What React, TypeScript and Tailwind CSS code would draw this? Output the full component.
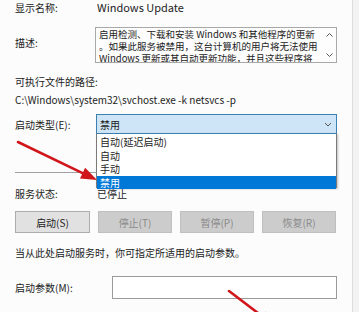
import React from 'react'

const font = { fontFamily: '"Noto Sans CJK SC", "Noto Sans", sans-serif' }

function Arrow({ className, x1, y1, x2, y2 }: { className: string; x1: number; y1: number; x2: number; y2: number }) {
  // red annotation arrow, drawn over the dialog
  const a = Math.atan2(y2 - y1, x2 - x1)
  const len = 16
  const w = 6
  const bx = x2 - len * Math.cos(a)
  const by = y2 - len * Math.sin(a)
  const p1 = `${bx + w * Math.sin(a)},${by - w * Math.cos(a)}`
  const p2 = `${bx - w * Math.sin(a)},${by + w * Math.cos(a)}`
  return (
    <svg className={className} width="359" height="312" viewBox="0 0 359 312">
      <line x1={x1} y1={y1} x2={bx} y2={by} stroke="#d0161b" strokeWidth="2.6" strokeLinecap="round" />
      <polygon points={`${x2},${y2} ${p1} ${p2}`} fill="#d0161b" />
    </svg>
  )
}

export default function App() {
  return (
    <div className="relative w-[359px] h-[312px] overflow-hidden bg-[#fcfcfc] flex text-[10px] text-[#222]" style={font}>
      <div className="w-[352px] pl-[15px] pr-[15px] flex flex-col">
        <div className="flex items-center h-[14px] mt-[0px]">
          <span className="w-[82px]">显示名称:</span>
          <span className="text-[11px]">Windows Update</span>
        </div>

        <div className="flex mt-[13px]">
          <span className="w-[80px] pt-[8px]">描述:</span>
          <div className="flex-1 h-[36px] border border-[#a8a8a8] bg-[#fdfdfd] flex overflow-hidden">
            <div className="flex-1 pl-[3px] pt-[1px] leading-[11.5px] text-[9.5px] whitespace-nowrap overflow-hidden">
              <div>启用检测、下载和安装 Windows 和其他程序的更新</div>
              <div>。如果此服务被禁用，这台计算机的用户将无法使用</div>
              <div className="mt-[1px]">Windows 更新或其自动更新功能，并且这些程序将</div>
            </div>
            <div className="w-[14px] flex flex-col items-center justify-between pt-[5px] pb-[5px]">
              <svg width="7" height="4" viewBox="0 0 7 4">
                <path d="M0.5 3.5 L3.5 0.5 L6.5 3.5" fill="none" stroke="#555" strokeWidth="1" />
              </svg>
              <svg width="7" height="4" viewBox="0 0 7 4">
                <path d="M0.5 0.5 L3.5 3.5 L6.5 0.5" fill="none" stroke="#555" strokeWidth="1" />
              </svg>
            </div>
          </div>
        </div>

        <div className="mt-[11px] h-[14px] flex items-center">可执行文件的路径:</div>
        <div className="mt-[4px] h-[14px] flex items-center">C:\Windows\system32\svchost.exe -k netsvcs -p</div>

        <div className="flex items-center mt-[8px]">
          <span className="w-[81px]">启动类型(E):</span>
          <div className="relative flex-1 h-[20px] border border-[#3c7fb1] bg-[#cde5f7] flex items-center justify-between pl-[3px] pr-[4px]">
            <span>禁用</span>
            <svg width="8" height="5" viewBox="0 0 8 5">
              <path d="M1 1 L4 4 L7 1" fill="none" stroke="#555" strokeWidth="1" />
            </svg>
            <div className="absolute left-[-1px] right-[-1px] top-[18px] h-[55px] border border-[#7a7a7a] border-t-[#3c7fb1] bg-white shadow-[1px_1px_2px_rgba(0,0,0,0.25)] z-10 flex flex-col pt-[1px] leading-[13.5px]">
              <div className="pl-[3px]">自动(延迟启动)</div>
              <div className="pl-[3px]">自动</div>
              <div className="pl-[3px]">手动</div>
              <div className="pl-[3px] bg-[#0078d7] text-white">禁用</div>
            </div>
          </div>
        </div>

        <div className="mt-[38px] border-t border-[#a0a0a0]" />

        <div className="flex items-center mt-[13px] h-[14px]">
          <span className="w-[82px]">服务状态:</span>
          <span>已停止</span>
        </div>

        <div className="flex gap-[8px] mt-[11px]">
          <div className="w-[75px] h-[22px] border border-[#adadad] bg-[#e1e1e1] flex items-center justify-center">启动(S)</div>
          <div className="w-[74px] h-[22px] border border-[#bfbfbf] bg-[#cccccc] text-[#8a8a8a] flex items-center justify-center">停止(T)</div>
          <div className="w-[74px] h-[22px] border border-[#bfbfbf] bg-[#cccccc] text-[#8a8a8a] flex items-center justify-center">暂停(P)</div>
          <div className="w-[74px] h-[22px] border border-[#bfbfbf] bg-[#cccccc] text-[#8a8a8a] flex items-center justify-center">恢复(R)</div>
        </div>

        <div className="mt-[12px] h-[14px] flex items-center">当从此处启动服务时，你可指定所适用的启动参数。</div>

        <div className="flex items-center mt-[17px]">
          <span className="w-[97px]">启动参数(M):</span>
          <div className="flex-1 h-[23px] border border-[#9a9a9a] bg-white" />
        </div>
      </div>
      <div className="flex-1 border-l border-[#dcdcdc] bg-[#f2f2f2]" />

      <Arrow className="absolute left-0 top-0 pointer-events-none" x1={18} y1={142} x2={97} y2={180} />
      <Arrow className="absolute left-0 top-0 pointer-events-none" x1={229} y1={291} x2={275} y2={326} />
    </div>
  )
}
